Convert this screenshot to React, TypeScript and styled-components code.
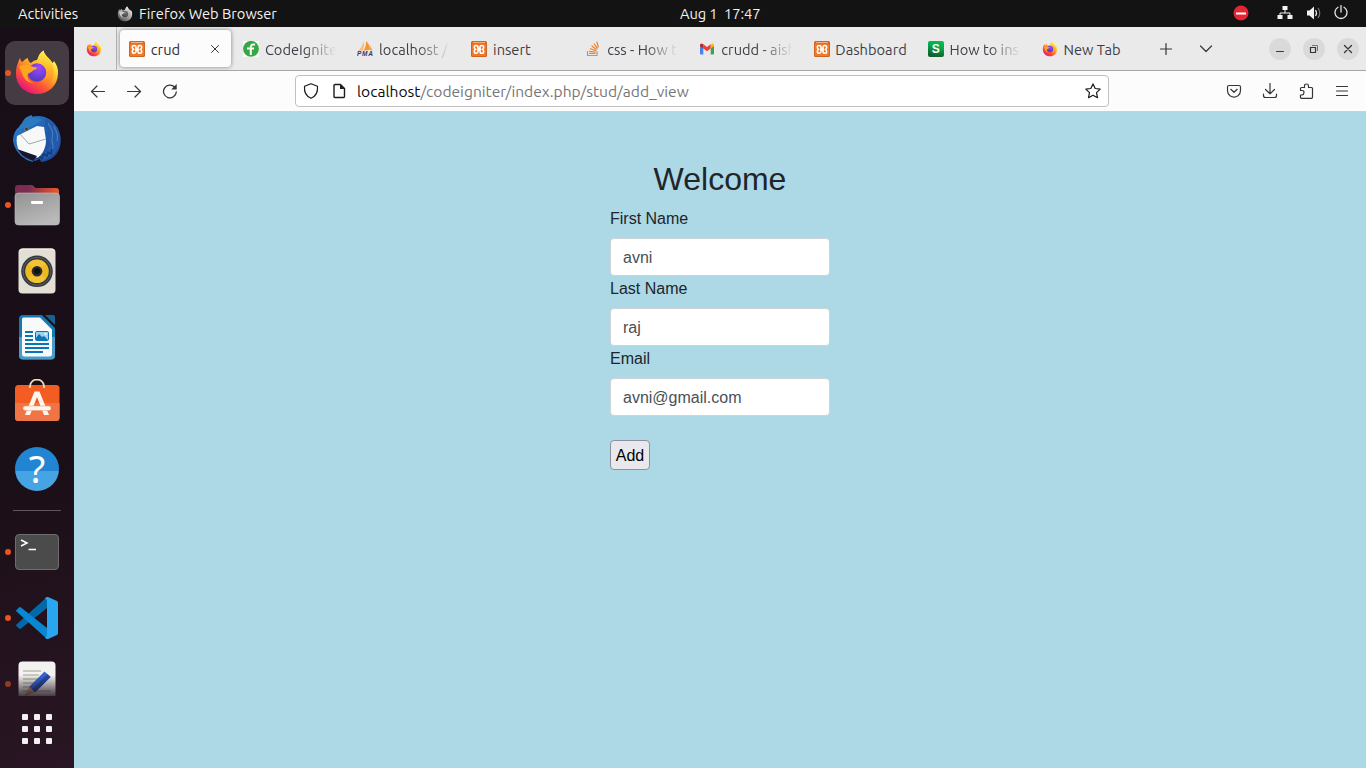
import React from 'react';
import styled, { createGlobalStyle, css } from 'styled-components';

const GlobalStyle = createGlobalStyle`
  *, *::before, *::after { box-sizing: border-box; }
  body { margin: 0; overflow: hidden; }
  svg { display: block; flex: none; }
`;

const uiFont = `Ubuntu, "Noto Sans", sans-serif`;

const Desktop = styled.div`
  width: 1366px;
  height: 768px;
  display: flex;
  flex-direction: column;
  font-family: ${uiFont};
  font-size: 14.67px;
`;

/* ---------- system bar ---------- */

const TopBar = styled.header`
  height: 27px;
  flex: none;
  background: #131313;
  color: #f2f2f2;
  display: grid;
  grid-template-columns: 1fr auto 1fr;
  align-items: center;
  line-height: 27px;
`;

const TopLeft = styled.div`
  display: flex;
  align-items: center;
  padding-left: 18px;
`;

const Activities = styled.span`
  width: 99px;
`;

const AppMenu = styled.span`
  display: flex;
  align-items: center;
  gap: 6px;
  white-space: nowrap;
`;

const Clock = styled.div`
  width: 82px;
  margin-left: 76px;
  white-space: pre;
  letter-spacing: -0.08px;
`;

const Tray = styled.div`
  display: flex;
  justify-content: flex-end;
  align-items: center;
  padding-right: 17.5px;
  padding-bottom: 1px;
`;

const TrayIcon = styled.span<{ $gap?: number }>`
  margin-left: ${(p) => p.$gap ?? 12}px;
`;

/* ---------- dock ---------- */

const Workspace = styled.div`
  flex: 1;
  min-height: 0;
  display: flex;
`;

const Dock = styled.nav`
  width: 74px;
  flex: none;
  padding-top: 14px;
  background: linear-gradient(165deg, #170e17 0%, #1b0f17 60%, #2a1624 100%);
  display: flex;
  flex-direction: column;
  align-items: center;
`;

const DockList = styled.div`
  height: 655px;
  overflow: hidden;
  width: 74px;
  display: flex;
  flex-direction: column;
  align-items: center;
  gap: 2px;
`;

const DockItem = styled.div<{ $active?: boolean; $running?: boolean; $dim?: boolean }>`
  width: 64px;
  height: 64px;
  flex: none;
  border-radius: 10px;
  position: relative;
  display: flex;
  align-items: center;
  justify-content: center;
  background: ${(p) => (p.$active ? '#453b43' : 'transparent')};
  ${(p) =>
    p.$running &&
    css`
      &::before {
        content: '';
        position: absolute;
        left: 0;
        top: 29px;
        width: 6px;
        height: 6px;
        border-radius: 50%;
        background: ${p.$dim ? '#923b24' : '#e95420'};
      }
    `}
`;

const DockSeparator = styled.div`
  width: 48px;
  height: 1px;
  flex: none;
  margin: 7px 0;
  background: #5e565c;
`;

const AppGrid = styled.div`
  margin-top: 18px;
  display: grid;
  grid-template-columns: repeat(3, 6px);
  grid-auto-rows: 6px;
  gap: 6px;
`;

const GridDot = styled.span`
  background: #f2f0f1;
  border-radius: 1px;
`;

/* ---------- browser ---------- */

const Browser = styled.main`
  flex: 1;
  min-width: 0;
  display: flex;
  flex-direction: column;
`;

const TabBar = styled.div`
  height: 44px;
  flex: none;
  background: #eaeaea;
  border-bottom: 1px solid #a9a7a9;
  display: flex;
  align-items: center;
`;

const PinnedTab = styled.div`
  width: 43px;
  height: 43px;
  flex: none;
  padding-left: 12px;
  border-right: 1px solid #b5b5b5;
  display: flex;
  align-items: center;
  margin-right: 1px;
`;

const TabSlot = styled.div`
  width: 114.1px;
  height: 43px;
  padding: 3px 1px 3px 2px;
  flex: none;
`;

const Tab = styled.div<{ $active?: boolean }>`
  height: 37px;
  padding: 0 8px 0 9px;
  border-radius: 4px;
  display: flex;
  align-items: center;
  gap: 5.8px;
  color: #3f3e46;
  ${(p) =>
    p.$active &&
    css`
      background: #fcfcfc;
      color: #2d2c34;
      box-shadow: 0 0 4px rgba(0, 0, 0, 0.45);
    `}
`;

const TabLabel = styled.span<{ $fade?: boolean }>`
  flex: 1;
  min-width: 0;
  overflow: hidden;
  white-space: nowrap;
  line-height: 24px;
  padding-top: 2px;
  margin-right: ${(p) => (p.$fade ? 1 : -4)}px;
  ${(p) => p.$fade && css`mask-image: linear-gradient(to left, transparent 0, #000 32px);`}
`;

const TabControls = styled.div`
  display: flex;
  align-items: center;
  gap: 24px;
  margin-left: 13.1px;
  padding-top: 1px;
`;

const WindowControls = styled.div`
  display: flex;
  gap: 12px;
  margin-left: auto;
  padding-right: 7px;
`;

const WindowButton = styled.span`
  width: 22px;
  height: 22px;
  border-radius: 50%;
  background: #dadada;
`;

const Toolbar = styled.div`
  height: 41px;
  flex: none;
  background: #fcfcfc;
  border-bottom: 1px solid #cfcfd2;
  padding: 0 16px 1px;
  display: flex;
  align-items: center;
`;

const NavButtons = styled.div`
  display: flex;
  gap: 20px;
  width: 205px;
`;

const UrlBar = styled.div`
  width: 814px;
  height: 32px;
  margin-top: 1px;
  border: 1px solid #c0c0c2;
  border-radius: 4px;
  background: #fff;
  padding: 0 7px;
  display: flex;
  align-items: center;
`;

const PageIconSlot = styled.span`
  margin-left: 12px;
`;

const UrlText = styled.span`
  flex: 1;
  margin-left: 10px;
  padding-top: 1px;
  color: #75757a;
  font-size: 15.6px;
  line-height: 29px;
  white-space: nowrap;
`;

const UrlHost = styled.span`
  color: #0c0c0d;
`;

const ToolbarIcons = styled.div`
  display: flex;
  gap: 20px;
  margin-left: auto;
`;

/* ---------- page ---------- */

const Page = styled.div`
  flex: 1;
  background: #add8e6;
  padding-top: 48px;
  display: flex;
  justify-content: center;
  font-family: "Liberation Sans", Arial, sans-serif;
  font-size: 16px;
  line-height: 24px;
  color: #212529;
`;

const Form = styled.form`
  width: 220px;
  display: flex;
  flex-direction: column;
`;

const Title = styled.h2`
  margin: 0 0 8px;
  font-size: 32px;
  line-height: 39px;
  font-weight: 400;
  text-align: center;
`;

const FieldLabel = styled.label`
  margin-bottom: 7px;
`;

const FieldInput = styled.input`
  width: 100%;
  height: 38px;
  margin-bottom: 1px;
  padding: 7px 12px 5px;
  border: 1px solid #ced4da;
  border-radius: 4px;
  background: #fff;
  color: #495057;
  font: inherit;
  outline: none;
`;

const AddButton = styled.button`
  align-self: flex-start;
  width: 40px;
  height: 30px;
  margin-top: 23px;
  padding: 1px 0 0;
  border: 1px solid #8f8f9d;
  border-radius: 4px;
  background: #e9e9ed;
  color: #000;
  font: inherit;
`;

/* ---------- icons ---------- */

function FirefoxIcon({ size = 48, mono = false }: { size?: number; mono?: boolean }) {
  const id = React.useId().replace(/:/g, '');
  const c = mono
    ? ['#eeeeee', '#b8b8b8', '#888888', '#555555', '#777777', '#444444', '#c9c9c9']
    : ['#fff44f', '#ffb326', '#ff5634', '#e5127f', '#a145ff', '#4a3bb8', '#ffa51f'];
  return (
    <svg width={size} height={size} viewBox={size < 20 ? '1 0 46 47' : '0 0 48 48'}>
      <defs>
        <linearGradient id={`${id}a`} x1="0.82" y1="0.1" x2="0.22" y2="0.95">
          <stop offset="0.08" stopColor={c[0]} />
          <stop offset="0.38" stopColor={c[1]} />
          <stop offset="0.68" stopColor={c[2]} />
          <stop offset="1" stopColor={c[3]} />
        </linearGradient>
        <radialGradient id={`${id}b`} cx="0.6" cy="0.25" r="0.8">
          <stop offset="0" stopColor={c[4]} />
          <stop offset="1" stopColor={c[5]} />
        </radialGradient>
        <linearGradient id={`${id}c`} x1="0.6" y1="0" x2="0.5" y2="1">
          <stop offset="0" stopColor={c[0]} />
          <stop offset="0.5" stopColor={c[1]} />
          <stop offset="1" stopColor={c[2]} stopOpacity="0" />
        </linearGradient>
      </defs>
      <path
        d="M7 9C7.500 11 8 12 9 13C11 11.500 12 10 15 9C15 11.500 16 13 18 14C20 12 22 11 24 11C25.500 6.500 27 3.500 30.500 1.500C31.500 7 37 9 39.500 14C40.500 13.500 40.500 12.500 41 12C44 16 45.500 20 45 25C44.500 37 35.500 45 24 45C12 45 3 36 3 25C3 20 3.500 17 5 14C5.500 12.500 6 10.500 7 9Z"
        fill={`url(#${id}a)`}
      />
      <path d="M25 12C26 7 28 3.500 30.500 1.500C32 8 38.500 10 40 18C43 30 36 39 26 39C33 35 36 30 34 23C33 18 29 13 25 12Z" fill={`url(#${id}c)`} />
      <circle cx="24" cy="23.500" r="9.300" fill={`url(#${id}b)`} />
      <path d="M6 18C11 14.500 16 16 19 17.500C21.500 18.500 24 18 24 19C23.500 20.500 20 21 18.500 23C17 24 15 24 14.500 26C14 30 17 33 21 34C14 34 10 29 9 24Z" fill={c[6]} />
    </svg>
  );
}

function ThunderbirdIcon() {
  return (
    <svg width="48" height="48" viewBox="0 0 48 48">
      <defs>
        <linearGradient id="tbBody" x1="0" y1="0" x2="1" y2="1">
          <stop offset="0" stopColor="#2b83d0" />
          <stop offset="0.5" stopColor="#225eb0" />
          <stop offset="1" stopColor="#173f8a" />
        </linearGradient>
      </defs>
      <path d="M13 5C19 0 29-.5 36 4C44 9 49 18 47.500 29C46 40 38 46 28 47L27 44L22 46C11 45 2 38 0 26C0 20 2 15 6 12C7 9 10 7 13 5Z" fill="url(#tbBody)" />
      <path d="M9 9C10 4 14 1 19 0C18 3 24 2 29 5C24 7 20 13 14 12C9 12 6 16 3 17C5 15 6 12 9 9Z" fill="#2a7abf" />
      <path d="M4 21L14 16L24 11L31 12L33 25C33 34 29 39 25 43L6 36C4 32 3 26 4 21Z" fill="#f7f8fa" />
      <path d="M7 19L16 29L33 24" fill="none" stroke="#a4a6a9" strokeWidth="1" />
      <path d="M4 34L24 41L20 46C13 45 7 41 4 34Z" fill="#191430" />
      <path d="M2 30C5 39 11 44 20 46.500" fill="none" stroke="#2d74b4" strokeWidth="1.200" />
      <circle cx="13.500" cy="14" r="1.900" fill="#43362d" stroke="#809194" strokeWidth="0.700" />
      <path d="M32 4C31 12 37 13 35 20C34 26 39 28 34 34L27 45C38 45 47 36 47 24C47 14 40 6 32 4Z" fill="#2458a8" />
      <path d="M35 8C38 14 41 16 39 23C38 29 43 31 38 36M41 11C43 17 46 19 44 26" fill="none" stroke="#3f7fc6" strokeWidth="1.200" />
      <path d="M24 44L27 42L29 44L31 39L34 41L35 37L38 39L39 34" fill="none" stroke="#173a77" strokeWidth="1.500" />
    </svg>
  );
}

function FilesIcon() {
  return (
    <svg width="48" height="48" viewBox="0 0 48 48">
      <defs>
        <linearGradient id="flBack"><stop offset="0.3" stopColor="#7b2c53" /><stop offset="1" stopColor="#ef5926" /></linearGradient>
        <linearGradient id="flFront" x1="0" y1="0" x2="0.5" y2="1"><stop offset="0" stopColor="#929292" /><stop offset="1" stopColor="#b9b9b9" /></linearGradient>
      </defs>
      <path d="M5 4H19Q20 4 21 5.500L22.500 7H43Q46 7 46 10V20H2V7Q2 4 5 4Z" fill="url(#flBack)" />
      <rect x="2" y="12" width="44.500" height="32" rx="3.500" fill="url(#flFront)" stroke="#c3bfc0" strokeWidth="0.600" />
      <rect x="18" y="20" width="12" height="3" rx="1" fill="#fff" />
    </svg>
  );
}

function MusicIcon() {
  return (
    <svg width="48" height="48" viewBox="0 0 48 48">
      <rect x="5.500" y="1.500" width="37" height="45" rx="4" fill="#e3dfd5" />
      <path d="M7 4Q7 2 9.500 2H39Q41 2 41 4" fill="none" stroke="#f8f6ef" />
      <circle cx="24" cy="24.300" r="15.800" fill="#34383e" />
      <circle cx="24" cy="24.300" r="14" fill="none" stroke="#5a6068" />
      <circle cx="24" cy="24.300" r="11.800" fill="#edb91e" />
      <path d="M24 24L15 17A11.500 11.500 0 0 1 33 17ZM24 24L15 31.500A11.500 11.500 0 0 0 33 31.500Z" fill="#f2c435" />
      <circle cx="24" cy="24.300" r="5.300" fill="#292b30" />
      <circle cx="24" cy="24" r="3" fill="#111" />
    </svg>
  );
}

function WriterIcon() {
  return (
    <svg width="48" height="48" viewBox="0 0 48 48">
      <path d="M10 2H29L42 15V42.500Q42 46.500 38 46.500H10Q6 46.500 6 42.500V6Q6 2 10 2Z" fill="#1678b1" />
      <path d="M6 24H42V42.500Q42 46.500 38 46.500H10Q6 46.500 6 42.500Z" fill="#469dca" />
      <path d="M10 4.500H27L39 16.500V41Q39 43.500 36.500 43.500H11.500Q9 43.500 9 41V7Q9 4.500 10 4.500Z" fill="#f7f9fb" />
      <path d="M32 2H40Q42 2 42 4V12Z" fill="#18628e" />
      <path d="M12 19H20M12 23H20M12 27H20M12 31H36M12 35H36M12 39H30" stroke="#0875b5" strokeWidth="2" />
      <rect x="22.500" y="18.500" width="13" height="9" rx="1.200" fill="#9cd0ec" stroke="#0875b5" />
      <path d="M23 27V25L26 21L29 24L31 23L35 27Z" fill="#0875b5" />
      <circle cx="32.500" cy="21" r="1" fill="#fff" />
    </svg>
  );
}

function SoftwareIcon() {
  return (
    <svg width="48" height="48" viewBox="0 0 48 48">
      <rect x="2" y="6" width="44.500" height="36" rx="3.500" fill="#f35d24" />
      <path d="M2 24H46.500V38.500Q46.500 42 43 42H5.500Q2 42 2 38.500Z" fill="#ef7446" />
      <path d="M17 9V7C18-1.500 30-1.500 31 7V9" fill="none" stroke="#f5dcb5" strokeWidth="1.800" />
      <path d="M21.500 12.500H26.500L36 36H31L24 18L17 36H12Z" fill="#fff6ed" />
      <rect x="10" y="27" width="28" height="4.500" rx="2.200" fill="#fff6ed" stroke="#f0936d" strokeWidth="0.500" />
    </svg>
  );
}

const HelpDisc = styled.div`
  width: 44px;
  height: 44px;
  border-radius: 50%;
  background: linear-gradient(#2185d4 0 54%, #46a4e4 54%);
  color: #fff;
  font: 38px/42px "Noto Sans", sans-serif;
  text-align: center;
`;

const TerminalBox = styled.div`
  width: 44px;
  height: 36px;
  border: 1px solid #6d6d6d;
  border-radius: 4px;
  background: #4b4b4b;
`;

function TerminalIcon() {
  return (
    <TerminalBox>
      <svg width="42" height="34" viewBox="0 0 42 34">
        <path d="M5 5L11 8L5 11M12.500 14.500H20" fill="none" stroke="#fff" strokeWidth="1.500" />
      </svg>
    </TerminalBox>
  );
}

function CodeIcon() {
  return (
    <svg width="48" height="48" viewBox="0 0 48 48">
      <path d="M3.500 30.500L34 3V14L8 34.500Q7 35.500 6 34.500L3.500 32Q2.500 31.500 3.500 30.500Z" fill="#0069aa" />
      <path d="M3.500 17.500L34 45V34L8 13.500Q7 12.500 6 13.500L3.500 16Q2.500 16.500 3.500 17.500Z" fill="#0b86d0" />
      <path d="M33 3.200L35 3L44 7Q45 7.500 45 9V39Q45 40.500 44 41L35 45Q33 45 32 43.500Q34 43 34 41V7Q34 5 32 4.500Z" fill="#2aa6ee" />
    </svg>
  );
}

function EditorIcon() {
  return (
    <svg width="48" height="48" viewBox="0 0 48 48">
      <defs>
        <linearGradient id="edFade" x1="0" y1="0" x2="0" y2="1">
          <stop offset="0" stopColor="#1e1019" stopOpacity="0" />
          <stop offset="1" stopColor="#1e1019" stopOpacity="0.850" />
        </linearGradient>
      </defs>
      <rect x="5.500" y="1.500" width="37" height="45" rx="4" fill="#f2f2f0" />
      <path d="M10 11H28M10 15H26M10 19H30M10 23H24M10 27H20M10 31H38" stroke="#bebbb0" strokeWidth="1.700" />
      <path d="M31.500 11.500L37.500 17L22 32.500L16 27Z" fill="#3765d5" />
      <path d="M34.500 14L37.500 17L22 32.500L19 29.500Z" fill="#244ca8" />
      <path d="M16 27L22 32.500L12 36Z" fill="#d5a575" />
      <rect x="5" y="15" width="38" height="22" fill="url(#edFade)" />
    </svg>
  );
}

function XamppIcon() {
  return (
    <svg width="16" height="16" viewBox="0 0 16 16">
      <rect width="16" height="16" rx="1.500" fill="#cf651f" />
      <rect x="1" y="2.500" width="14" height="12.500" rx="1" fill="#f07a2a" />
      <path d="M2 1.500H14" stroke="#f4b183" />
      <path d="M7 6.200C7 3.800 3.300 3.800 3.300 6.200Q3.300 7.600 4.500 8.300Q3.300 9 3.300 10.400C3.300 12.800 7 12.800 7 10.400M9 6.200C9 3.800 12.700 3.800 12.700 6.200Q12.700 7.600 11.500 8.300Q12.700 9 12.700 10.400C12.700 12.800 9 12.800 9 10.400M6 8.300H10M7 6.200V7.500H9V6.200M7 10.400V9.200H9V10.400" fill="none" stroke="#fff" strokeWidth="1.500" />
    </svg>
  );
}

function FormGetIcon() {
  return (
    <svg width="16" height="16" viewBox="0 0 16 16">
      <rect width="16" height="16" fill="#fbfdfb" />
      <circle cx="8" cy="7.800" r="7.900" fill="#35a844" />
      <path d="M12 3.800Q8.300 2.500 7.800 6V14M4 7.500H11" fill="none" stroke="#fff" strokeWidth="2" />
    </svg>
  );
}

const PmaText = styled.text`
  font: italic 700 6.5px "Liberation Sans", Arial, sans-serif;
  fill: #33366b;
`;

function PmaIcon() {
  return (
    <svg width="16" height="16" viewBox="0 0 16 16">
      <path d="M6.500 0Q8 5 5.500 9.500L1 10Q5.500 6 6.500 0Z" fill="#f5bd85" />
      <path d="M9 0Q13.500 4 12.700 9L6.500 9.500Q9.500 5 9 0Z" fill="#f6962d" />
      <path d="M12.500 3.500L15.500 9.300H13Z" fill="#f7a54b" />
      <PmaText x="0" y="15" textLength="16">PMA</PmaText>
    </svg>
  );
}

function StackIcon() {
  return (
    <svg width="16" height="16" viewBox="0 0 16 16">
      <path d="M2.500 10V14.500H12V10" fill="none" stroke="#9a9c9f" strokeWidth="1.200" />
      <path d="M4 12.500H10.500M4.100 10.300L10.500 11.200M4.900 7.500L11 9.800M6.600 4.800L11.600 8.800M8.900 2.500L12.500 7.700M11.800 0.700L13.300 6.500" stroke="#f48024" strokeWidth="1.200" />
    </svg>
  );
}

function GmailIcon() {
  return (
    <svg width="16" height="16" viewBox="0 0 16 16">
      <path d="M1 4V12.500Q1 13.500 2 13.500H4.300V6.500Z" fill="#4285f4" />
      <path d="M11.700 6.500V13.500H14Q15 13.500 15 12.500V4Z" fill="#34a853" />
      <path d="M11.700 3.500V7.500L15 5V4Q15 2.500 13.500 2.500Z" fill="#fbbc04" />
      <path d="M4.300 7.500V3.300L8 6L11.700 3.300V7.500L8 10.300Z" fill="#ea4335" />
      <path d="M1 5V4Q1 2.500 2.500 2.500L4.300 3.300V7.500Z" fill="#c5221f" />
    </svg>
  );
}

const SBadge = styled.span`
  width: 16px;
  height: 16px;
  flex: none;
  border-radius: 2px;
  background: linear-gradient(15deg, #13602c 15%, #08a64b 60%, #00c554);
  color: #fff;
  font: 700 12px/16px "Liberation Sans", Arial, sans-serif;
  text-align: center;
`;

const LineIcon = ({ d, size = 16, color = '#35353b', width = 1.2, fill = 'none' }: { d: string; size?: number; color?: string; width?: number; fill?: string }) => (
  <svg width={size} height={size} viewBox={`0 0 ${size} ${size}`}>
    <path d={d} fill={fill} stroke={color} strokeWidth={width} strokeLinecap="round" strokeLinejoin="round" />
  </svg>
);

function ReloadIcon() {
  return (
    <svg width="16" height="16" viewBox="0 0 16 16">
      <path d="M14.300 9A6.400 6.400 0 1 1 12.500 4" fill="none" stroke="#35353b" strokeWidth="1.300" strokeLinecap="round" />
      <path d="M14.700 1V6.500H9.200Z" fill="#35353b" />
    </svg>
  );
}

function DocumentIcon() {
  return (
    <svg width="16" height="16" viewBox="0 0 16 16">
      <path d="M4 1.500H9.500L13.500 5.500V13.500Q13.500 14.500 12.500 14.500H4Q3 14.500 3 13.500V2.500Q3 1.500 4 1.500Z" fill="none" stroke="#1b1b20" strokeWidth="1.400" strokeLinejoin="round" />
      <path d="M9 1.500L13.500 6H9Z" fill="#1b1b20" />
    </svg>
  );
}

const tabs: { icon: React.ReactNode; label: string; active?: boolean; fade?: boolean }[] = [
  { icon: <XamppIcon />, label: 'crud', active: true },
  { icon: <FormGetIcon />, label: 'CodeIgnite', fade: true },
  { icon: <PmaIcon />, label: 'localhost /', fade: true },
  { icon: <XamppIcon />, label: 'insert' },
  { icon: <StackIcon />, label: 'css - How to', fade: true },
  { icon: <GmailIcon />, label: 'crudd - aish', fade: true },
  { icon: <XamppIcon />, label: 'Dashboard' },
  { icon: <SBadge>S</SBadge>, label: 'How to inse', fade: true },
  { icon: <FirefoxIcon size={16} />, label: 'New Tab' },
];

const fields = [
  { id: 'first', label: 'First Name', value: 'avni' },
  { id: 'last', label: 'Last Name', value: 'raj' },
  { id: 'email', label: 'Email', value: 'avni@gmail.com' },
];

export default function App() {
  return (
    <Desktop>
      <GlobalStyle />
      <TopBar>
        <TopLeft>
          <Activities>Activities</Activities>
          <AppMenu>
            <FirefoxIcon size={16} mono />
            Firefox Web Browser
          </AppMenu>
        </TopLeft>
        <Clock>{'Aug 1  17:47'}</Clock>
        <Tray>
          <svg width="16" height="16" viewBox="0 0 16 16">
            <circle cx="8" cy="8" r="7.500" fill="#e32636" />
            <path d="M3 8.500H13" stroke="#fff" strokeWidth="2" />
          </svg>
          <TrayIcon $gap={28}>
            <svg width="16" height="16" viewBox="0 0 16 16">
              <path d="M8 5V8M3 11V8H13V11" fill="none" stroke="#f2f2f2" />
              <path d="M5.500 1H10.500V5H5.500ZM0.500 10H5.500V14H0.500ZM10.500 10H15.500V14H10.500Z" fill="#f2f2f2" />
            </svg>
          </TrayIcon>
          <TrayIcon $gap={13}>
            <svg width="16" height="16" viewBox="0 0 16 16">
              <path d="M1 5.500H3.500L8 1.500V14.500L3.500 10.500H1Z" fill="#f2f2f2" />
              <path d="M9.500 5Q11.500 8 9.500 11" fill="none" stroke="#f2f2f2" strokeWidth="1.200" />
              <path d="M12 3Q15.500 8 12 13" fill="none" stroke="#777" strokeWidth="1.200" />
            </svg>
          </TrayIcon>
          <TrayIcon $gap={11}>
            <svg width="16" height="16" viewBox="0 0 16 16">
              <path d="M5 2.300A6 6 0 1 0 11 2.300M8 0.500V7" fill="none" stroke="#e6e6e6" strokeWidth="1.300" strokeLinecap="round" />
            </svg>
          </TrayIcon>
        </Tray>
      </TopBar>
      <Workspace>
        <Dock>
          <DockList>
            <DockItem $active $running><FirefoxIcon /></DockItem>
            <DockItem><ThunderbirdIcon /></DockItem>
            <DockItem $running><FilesIcon /></DockItem>
            <DockItem><MusicIcon /></DockItem>
            <DockItem><WriterIcon /></DockItem>
            <DockItem><SoftwareIcon /></DockItem>
            <DockItem><HelpDisc>?</HelpDisc></DockItem>
            <DockSeparator />
            <DockItem $running><TerminalIcon /></DockItem>
            <DockItem $running><CodeIcon /></DockItem>
            <DockItem $running $dim><EditorIcon /></DockItem>
          </DockList>
          <AppGrid>
            {Array.from({ length: 9 }, (_, i) => <GridDot key={i} />)}
          </AppGrid>
        </Dock>
        <Browser>
          <TabBar>
            <PinnedTab><FirefoxIcon size={16} /></PinnedTab>
            {tabs.map((t, i) => (
              <TabSlot key={i}>
                <Tab $active={t.active}>
                  {t.icon}
                  <TabLabel $fade={t.fade}>{t.label}</TabLabel>
                  {t.active && <LineIcon d="M4.500 4.500L11.500 11.500M11.500 4.500L4.500 11.500" width={1} />}
                </Tab>
              </TabSlot>
            ))}
            <TabControls>
              <LineIcon d="M8 2.500V13.500M2.500 8H13.500" />
              <LineIcon d="M2.500 5L8 10.500L13.500 5" />
            </TabControls>
            <WindowControls>
              <WindowButton><LineIcon size={22} d="M7.500 13.500H14.500" width={1} /></WindowButton>
              <WindowButton>
                <svg width="22" height="22" viewBox="0 0 22 22">
                  <path d="M7.500 9.500H12.500V14.500H7.500Z" fill="none" stroke="#333" strokeWidth="1.200" />
                  <path d="M9 7.500H14.500V13" fill="none" stroke="#777" />
                </svg>
              </WindowButton>
              <WindowButton><LineIcon size={22} d="M7.500 7.500L14.500 14.500M14.500 7.500L7.500 14.500" width={1.3} /></WindowButton>
            </WindowControls>
          </TabBar>
          <Toolbar>
            <NavButtons>
              <LineIcon d="M14.500 8.500H1.500M7 3L1.500 8.500L7 14" />
              <LineIcon d="M1.500 8.500H14.500M9 3L14.500 8.500L9 14" />
              <ReloadIcon />
            </NavButtons>
            <UrlBar>
              <LineIcon color="#1b1b20" d="M8 0.800L14.500 3.300C15 9 12.500 13.500 8 15.300C3.500 13.500 1 9 1.500 3.300Z" />
              <PageIconSlot><DocumentIcon /></PageIconSlot>
              <UrlText><UrlHost>localhost</UrlHost>/codeigniter/index.php/stud/add_view</UrlText>
              <LineIcon color="#1b1b20" d="M8 0.900L10.200 5.500L15.200 6.100L11.500 9.600L12.500 14.700L8 12.200L3.500 14.700L4.500 9.600L0.800 6.100L5.800 5.500Z" />
            </UrlBar>
            <ToolbarIcons>
              <LineIcon d="M3 2.500H13Q14.500 2.500 14.500 4V7.500Q14.500 11 12 12.800Q8 15.500 4 12.800Q1.500 11 1.500 7.500V4Q1.500 2.500 3 2.500ZM4.800 6.300L8 9.300L11.200 6.300" />
              <LineIcon d="M8 0.500V10.500M3.500 6.500L8 10.800L12.500 6.500M1.500 11V12.500Q1.500 14.500 3.500 14.500H12.500Q14.500 14.500 14.500 12.500V11" />
              <LineIcon d="M2.500 7V5.500Q2.500 4.500 3.500 4.500H6.500V3Q6.500 1 8.500 1T10.500 3V4.500H13.500Q14.500 4.500 14.500 5.500V14Q14.500 15.300 13.500 15.300H3.500Q2.500 15.300 2.500 14.300V12H4Q6 11.500 6 9.500T4 7.500H2.500" />
              <LineIcon d="M2.500 3.500H13.500M2.500 8H13.500M2.500 12.500H13.500" />
            </ToolbarIcons>
          </Toolbar>
          <Page>
            <Form onSubmit={(e) => e.preventDefault()}>
              <Title>Welcome</Title>
              {fields.map((f) => (
                <React.Fragment key={f.id}>
                  <FieldLabel htmlFor={f.id}>{f.label}</FieldLabel>
                  <FieldInput id={f.id} defaultValue={f.value} />
                </React.Fragment>
              ))}
              <AddButton type="submit">Add</AddButton>
            </Form>
          </Page>
        </Browser>
      </Workspace>
    </Desktop>
  );
}
